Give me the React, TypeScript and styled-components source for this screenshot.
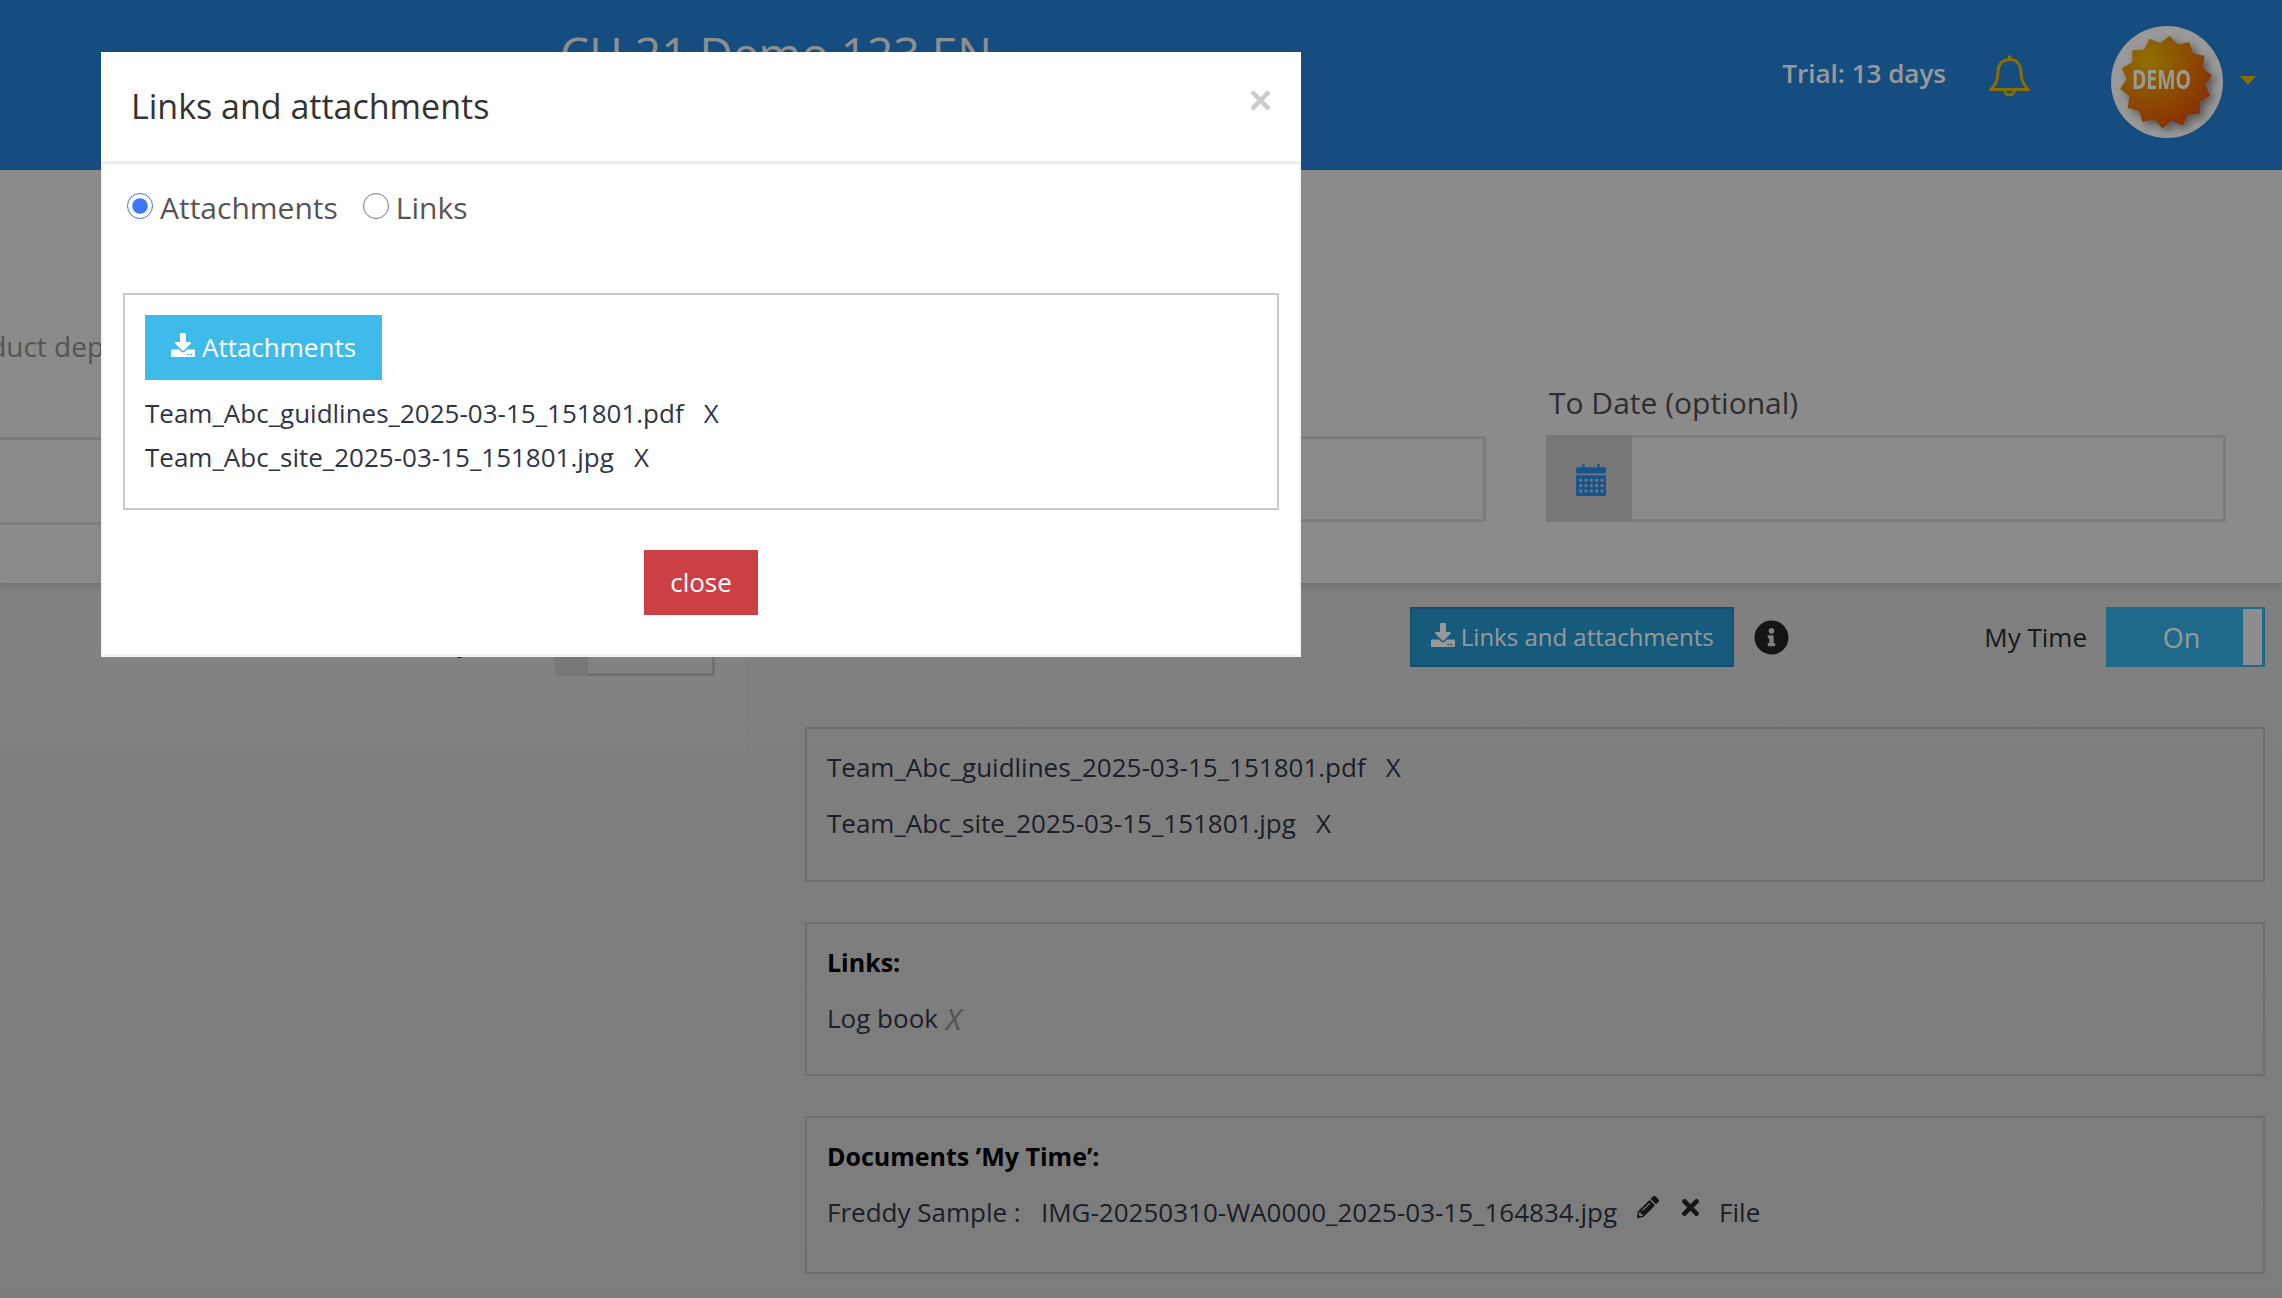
import React from "react";
import styled, { createGlobalStyle } from "styled-components";
import { FaDownload, FaInfoCircle, FaPencilAlt, FaTimes } from "react-icons/fa";

const Global = createGlobalStyle`
  html, body { margin: 0; padding: 0; height: 100%; }
  body { font-family: "Open Sans", "Noto Sans", sans-serif; color: #303544; }
  * { box-sizing: border-box; }
`;

const Page = styled.div`
  position: relative;
  width: 2282px;
  height: 1298px;
  overflow: hidden;
  background: linear-gradient(#dadada, #cfcfcf);
`;

const Header = styled.header`
  height: 170px;
  background: #2680d5;
  display: flex;
  align-items: flex-start;
  padding-left: 560px;
`;

const AppTitle = styled.h1`
  margin: 25px auto 0 0;
  font-size: 46px;
  line-height: 56px;
  font-weight: 400;
  color: #eeeeee;
`;

const Trial = styled.span`
  margin-top: 53px;
  font-size: 26px;
  line-height: 40px;
  font-weight: 600;
  color: #ffffff;
`;

const BellIcon = styled.svg`
  width: 41px;
  height: 44px;
  margin: 54px 0 0 43px;
  fill: none;
  stroke: #e6b600;
  stroke-width: 3;
`;

const Avatar = styled.div`
  width: 112px;
  height: 112px;
  margin: 26px 0 0 81px;
  border-radius: 50%;
  background: #ffffff;
  svg { display: block; filter: drop-shadow(4px 4px 4px rgba(0,0,0,.45)); }
`;

const Caret = styled.span`
  width: 0;
  height: 0;
  margin: 76px 26px 0 17px;
  border-left: 8px solid transparent;
  border-right: 8px solid transparent;
  border-top: 9px solid #e6b600;
`;

const FilterBand = styled.section`
  height: 413px;
  background: #e8e8e8;
  box-shadow: 0 3px 7px rgba(0,0,0,.14);
  position: relative;
  display: grid;
  grid-template-columns: 600px 826px 680px;
  column-gap: 60px;
  align-items: end;
  padding-bottom: 58px;
`;

const FieldColumn = styled.div<{ $lift?: number }>`
  display: flex;
  flex-direction: column;
  min-width: 0;
  margin-bottom: ${(p) => p.$lift ?? 0}px;
`;

const FaintLabel = styled.label`
  margin: 0 0 69px -56px;
  font-size: 28px;
  line-height: 44px;
  color: #8e8e8e;
  white-space: nowrap;
`;

const StrongLabel = styled.label`
  margin: 0 0 12px 3px;
  font-size: 30px;
  line-height: 40px;
  color: #4d4d4d;
`;

const PlainInput = styled.div<{ $h: number }>`
  height: ${(p) => p.$h}px;
  border: 3px solid #cfcfcf;
  border-left: 0;
`;

const DateInput = styled.div`
  height: 87px;
  display: flex;
  border: 3px solid #cfcfcf;
  border-left: 0;
`;

const Addon = styled.span<{ $w: number }>`
  width: ${(p) => p.$w}px;
  margin: -3px 0;
  background: #c6c6c6;
  display: flex;
  align-items: center;
  justify-content: center;
`;

const LowerArea = styled.div`
  display: flex;
  align-items: flex-start;
`;

const SidePanel = styled.aside`
  width: 745px;
  height: 167px;
  flex: none;
  background: #d9d9d9;
  display: flex;
  align-items: flex-start;
  padding: 24px 0 0 0;
`;

const SideLabel = styled.span`
  width: 470px;
  margin-top: 17px;
  text-align: right;
  font-size: 26px;
  line-height: 36px;
`;

const SideInput = styled.div`
  width: 160px;
  height: 69px;
  margin-left: 85px;
  display: flex;
  border: 3px solid #bdbdbd;
  border-left: 0;
`;

const MainColumn = styled.main`
  width: 1460px;
  margin-left: 60px;
  padding-top: 24px;
`;

const Toolbar = styled.div`
  display: flex;
  justify-content: flex-end;
  align-items: center;
  height: 60px;
  margin-bottom: 60px;
`;

const LinksButton = styled.button`
  width: 324px;
  height: 60px;
  padding: 0 0 1px;
  display: flex;
  align-items: center;
  justify-content: center;
  gap: 6px;
  background: #2696cf;
  border: 2px solid #2384bb;
  color: #ffffff;
  font: 400 24px "Open Sans", sans-serif;
`;

const InfoGlyph = styled(FaInfoCircle)`
  margin-left: 20px;
  width: 35px;
  height: 35px;
  color: #222222;
`;

const MyTimeLabel = styled.span`
  margin-left: 195px;
  padding-right: 1px;
  font-size: 26px;
  color: #2b2b2b;
`;

const Toggle = styled.div`
  width: 159px;
  height: 60px;
  margin-left: 18px;
  background: #34b1e6;
  border: 2px solid #34b1e6;
  display: flex;
  align-items: center;
  color: #ffffff;
  font-size: 27px;
`;

const ToggleText = styled.span`
  flex: 1;
  padding-left: 12px;
  text-align: center;
`;

const ToggleHandle = styled.span`
  width: 19px;
  height: 100%;
  margin-right: 1px;
  background: #ebebeb;
`;

const InfoBox = styled.section<{ $h: number }>`
  height: ${(p) => p.$h}px;
  margin-bottom: 40px;
  padding: 18px 20px 0;
  border: 2px solid #b6b6b6;
`;

const BoxLine = styled.div`
  display: flex;
  align-items: center;
  height: 40px;
  margin-bottom: 16px;
  font-size: 26px;
  white-space: pre;
`;

const BoxTitle = styled(BoxLine)`
  font-weight: 700;
  color: #000000;
  font-size: 25px;
`;

const Remove = styled.span`
  margin-left: 20px;
`;

const ItalicX = styled.i`
  margin-left: 8px;
  font-size: 29px;
  color: #8a8a8a;
`;

const DocIcons = styled.span`
  display: inline-flex;
  align-items: center;
  gap: 19px;
  margin: -10px 16px 0 20px;
  color: #252525;
  svg:first-child { width: 22px; height: 22px; }
  svg:last-child { width: 25px; height: 25px; }
`;

const Backdrop = styled.div`
  position: absolute;
  inset: 0;
  background: rgba(0, 0, 0, 0.4);
`;

const Modal = styled.div`
  position: absolute;
  top: 52px;
  left: 101px;
  width: 1200px;
  height: 605px;
  background: #ffffff;
  display: flex;
  flex-direction: column;
`;

const ModalHeader = styled.div`
  height: 112px;
  flex: none;
  padding: 0 30px;
  display: flex;
  align-items: flex-start;
  justify-content: space-between;
  border-bottom: 3px solid #eeeeee;
`;

const ModalTitle = styled.h2`
  margin: 33px 0 0;
  font-size: 34px;
  line-height: 42px;
  font-weight: 400;
  color: #333333;
`;

const CloseX = styled.button`
  margin: 24px -1px 0 0;
  padding: 0;
  border: 0;
  background: none;
  color: #cccccc;
  font: 700 40px/48px "Liberation Sans", sans-serif;
`;

const ModalBody = styled.div`
  flex: 1;
  display: flex;
  flex-direction: column;
  padding: 0 20px 0 20px;
  border: solid #f5f5f5;
  border-width: 0 2px 3px;
`;

const RadioRow = styled.div`
  height: 129px;
  flex: none;
  padding: 22px 0 0 4px;
  display: flex;
  align-items: flex-start;
  gap: 25px;
`;

const RadioOption = styled.label`
  display: flex;
  align-items: center;
  gap: 7px;
  height: 42px;
  font-size: 30px;
  color: #555555;
`;

const Radio = styled.input`
  width: 26px;
  height: 26px;
  margin: -2px 0 0 0;
  accent-color: #3a76f5;
`;

const AttachmentBox = styled.div`
  height: 217px;
  flex: none;
  padding: 20px 20px 0;
  border: 2px solid #ccc8cc;
`;

const AttachButton = styled.button`
  width: 237px;
  height: 65px;
  padding: 0 0 2px;
  display: flex;
  align-items: center;
  justify-content: center;
  gap: 7px;
  background: #3fbbe9;
  border: 0;
  color: #ffffff;
  font: 400 26px "Open Sans", sans-serif;
`;

const FileList = styled.div`
  margin-top: 11px;
`;

const FileRow = styled.div`
  height: 44px;
  display: flex;
  align-items: center;
  font-size: 26px;
  white-space: pre;
`;

const ModalFooter = styled.div`
  display: flex;
  justify-content: center;
  padding-top: 40px;
`;

const CloseButton = styled.button`
  width: 114px;
  height: 65px;
  padding: 0 0 2px;
  border: 0;
  background: #cc3f45;
  color: #ffffff;
  font: 400 26px "Open Sans", sans-serif;
`;

const SaveIcon = styled(FaDownload)`
  width: 24px;
  height: 24px;
  margin-top: -4px;
`;

const CalendarSvg = styled.svg`
  width: 30px;
  height: 32px;
  margin: 3px 0 0 4px;
`;

const starPoints = (() => {
  const pts: string[] = [];
  const n = 14;
  for (let i = 0; i < n * 2; i++) {
    const r = i % 2 === 0 ? 45 : 38;
    const a = (Math.PI * i) / n - Math.PI / 2 + 0.08;
    pts.push(`${(55 + r * Math.cos(a)).toFixed(1)},${(56 + r * Math.sin(a)).toFixed(1)}`);
  }
  return pts.join(" ");
})();

const DemoBadge = () => (
  <svg width="112" height="112" viewBox="0 0 112 112">
    <defs>
      <radialGradient id="badge" cx="0.3" cy="0.25" r="0.85">
        <stop offset="0" stopColor="#eebb00" />
        <stop offset="1" stopColor="#e64a00" />
      </radialGradient>
    </defs>
    <polygon points={starPoints} fill="url(#badge)" stroke="url(#badge)" strokeWidth="2" strokeLinejoin="round" />
    <text
      x="21"
      y="63"
      fontFamily="'Open Sans', sans-serif"
      fontWeight="700"
      fontSize="27"
      fill="#ffffff"
      textLength="59"
      lengthAdjust="spacingAndGlyphs"
    >
      DEMO
    </text>
  </svg>
);

const CalendarIcon = () => (
  <CalendarSvg viewBox="0 0 28 30">
    <path fill="#268cee" d="M6 0h2v3h12V0h2v3h5a1 1 0 0 1 1 1v5H0V4a1 1 0 0 1 1-1h5zM0 10.500h28V29a1 1 0 0 1-1 1H1a1 1 0 0 1-1-1z" />
    {[0, 1, 2].map((r) =>
      [0, 1, 2, 3, 4].map((c) => (
        <rect key={`${r}-${c}`} x={3 + c * 5} y={14 + r * 5} width="2.600" height="2.600" fill="#c6c6c6" />
      ))
    )}
  </CalendarSvg>
);

export default function App() {
  return (
    <Page>
      <Global />
      <Header>
        <AppTitle>CH 21 Demo 123 EN</AppTitle>
        <Trial>Trial: 13 days</Trial>
        <BellIcon viewBox="0 0 41 44">
          <path d="M20.500 1.500v4M20.500 5.500C13 5.500 9 11 9 18c0 9-3 13-7 17.500h37C35 31 32 27 32 18c0-7-4-12.500-11.500-12.500z" />
          <path d="M15.500 36a5 5 0 0 0 10 0" />
        </BellIcon>
        <Avatar><DemoBadge /></Avatar>
        <Caret />
      </Header>

      <FilterBand>
        <FieldColumn>
          <FaintLabel>Product department</FaintLabel>
          <PlainInput $h={88} />
        </FieldColumn>
        <FieldColumn $lift={3}>
          <PlainInput $h={86} />
        </FieldColumn>
        <FieldColumn $lift={3}>
          <StrongLabel>To Date (optional)</StrongLabel>
          <DateInput>
            <Addon $w={86}><CalendarIcon /></Addon>
          </DateInput>
        </FieldColumn>
      </FilterBand>

      <LowerArea>
        <SidePanel>
          <SideLabel>Sorted by</SideLabel>
          <SideInput>
            <Addon $w={33} />
          </SideInput>
        </SidePanel>
        <MainColumn>
          <Toolbar>
            <LinksButton><SaveIcon />Links and attachments</LinksButton>
            <InfoGlyph />
            <MyTimeLabel>My Time</MyTimeLabel>
            <Toggle>
              <ToggleText>On</ToggleText>
              <ToggleHandle />
            </Toggle>
          </Toolbar>
          <InfoBox $h={155}>
            <BoxLine>Team_Abc_guidlines_2025-03-15_151801.pdf<Remove>X</Remove></BoxLine>
            <BoxLine>Team_Abc_site_2025-03-15_151801.jpg<Remove>X</Remove></BoxLine>
          </InfoBox>
          <InfoBox $h={154}>
            <BoxTitle>Links:</BoxTitle>
            <BoxLine>Log book<ItalicX>X</ItalicX></BoxLine>
          </InfoBox>
          <InfoBox $h={158}>
            <BoxTitle>Documents ’My Time’:</BoxTitle>
            <BoxLine>
              Freddy Sample :   IMG-20250310-WA0000_2025-03-15_164834.jpg
              <DocIcons><FaPencilAlt /><FaTimes /></DocIcons>
              File
            </BoxLine>
          </InfoBox>
        </MainColumn>
      </LowerArea>

      <Backdrop />

      <Modal role="dialog" aria-modal="true">
        <ModalHeader>
          <ModalTitle>Links and attachments</ModalTitle>
          <CloseX>×</CloseX>
        </ModalHeader>
        <ModalBody>
          <RadioRow>
            <RadioOption><Radio type="radio" name="kind" defaultChecked />Attachments</RadioOption>
            <RadioOption><Radio type="radio" name="kind" />Links</RadioOption>
          </RadioRow>
          <AttachmentBox>
            <AttachButton><SaveIcon />Attachments</AttachButton>
            <FileList>
              <FileRow>Team_Abc_guidlines_2025-03-15_151801.pdf<Remove>X</Remove></FileRow>
              <FileRow>Team_Abc_site_2025-03-15_151801.jpg<Remove>X</Remove></FileRow>
            </FileList>
          </AttachmentBox>
          <ModalFooter>
            <CloseButton>close</CloseButton>
          </ModalFooter>
        </ModalBody>
      </Modal>
    </Page>
  );
}
